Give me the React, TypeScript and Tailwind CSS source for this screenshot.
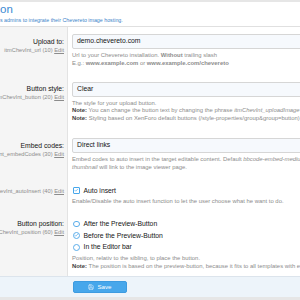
import type { ReactNode } from 'react';
import { Check, Save } from 'lucide-react';

function Row({
  label,
  id,
  children,
  leftTop = 'pt-[10.5px]',
  rightTop = 'pt-[7px]',
  bottom,
}: {
  label?: string;
  id: string;
  children: ReactNode;
  leftTop?: string;
  rightTop?: string;
  bottom: string;
}) {
  return (
    <div className="flex">
      <div className={`flex w-[68px] shrink-0 flex-col items-end border-r border-[#e3e3e3] bg-[#f5f5f5] pr-[3px] ${leftTop}`}>
        {label && <div className="whitespace-nowrap text-[6.8px] leading-[8px] text-[#141414]">{label}</div>}
        <div className={`whitespace-nowrap text-[5.7px] text-[#8c8c8c] ${label ? 'mt-[1px] leading-[7px]' : 'leading-[8px]'}`}>
          {id} <span className="underline">Edit</span>
        </div>
      </div>
      <div className={`min-w-0 flex-1 pl-[4px] ${rightTop} ${bottom}`}>{children}</div>
    </div>
  );
}

function Input({ value }: { value: string }) {
  return (
    <div className="flex h-[15px] w-[260px] items-center rounded-[2px] border border-[#d6d6d6] bg-[#f6f9fd] pl-[4px] text-[6.8px] text-[#141414]">
      {value}
    </div>
  );
}

function Help({ children, top = 'mt-[3px]' }: { children: ReactNode; top?: string }) {
  return <div className={`whitespace-nowrap text-[5.9px] leading-[7.7px] text-[#8c8c8c] ${top}`}>{children}</div>;
}

function Radio({ label, checked }: { label: string; checked?: boolean }) {
  return (
    <div className="flex h-[8px] items-center gap-[4px] pl-[1px] text-[6.8px] text-[#141414]">
      <span className="flex h-[6.5px] w-[6.5px] items-center justify-center rounded-full border border-[#5badea] bg-white">
        {checked && <Check size={4.5} strokeWidth={3.5} className="text-[#47a7eb]" />}
      </span>
      {label}
    </div>
  );
}

export default function App() {
  return (
    <div className="h-[300px] w-[300px] overflow-hidden bg-white font-['Liberation_Sans',Arial,sans-serif]">
      <div className="h-[2px] bg-[#e6e6e6]" />

      {/* page title */}
      <div className="h-[25px] border-b border-[#e0e0e0] pt-[1px]">
        <h1 className="whitespace-nowrap text-[11.5px] leading-[13.5px] text-[#3b8ad3]">on</h1>
        <p className="whitespace-nowrap text-[5.3px] leading-[7px] text-[#3a84c9]">
          s admins to integrate their Chevereto image hosting.
        </p>
      </div>

      {/* options */}
      <Row label="Upload to:" id="itmChevInt_url (10)" bottom="pb-[7.3px]">
        <Input value="demo.chevereto.com" />
        <Help>
          Url to your Chevereto installation. <b>Without</b> trailing slash
          <br />
          E.g.: <b>www.example.com</b> or <b>www.example.com/chevereto</b>
        </Help>
      </Row>

      <Row label="Button style:" id="itmChevInt_button (20)" bottom="pb-[8.2px]">
        <Input value="Clear" />
        <Help>
          The style for your upload button.
          <br />
          <b className="text-[#3c3c3c]">Note:</b> You can change the button text by changing the phrase{' '}
          <i>itmChevInt_uploadImage</i>.
          <br />
          <b className="text-[#3c3c3c]">Note:</b> Styling based on XenForo default buttons
          (/style-properties/group&amp;group=button)
        </Help>
      </Row>

      <Row label="Embed codes:" id="itmChevInt_embedCodes (30)" bottom="pb-[8.2px]">
        <Input value="Direct links" />
        <Help>
          Embed codes to auto insert in the target editable content. Default <i>bbcode-embed-medium</i>
          <br />
          <i>thumbnail</i> will link to the image viewer page.
        </Help>
      </Row>

      <Row id="itmChevInt_autoInsert (40)" leftTop="pt-[7px]" bottom="pb-[8px]">
        <div className="flex h-[8px] items-center gap-[4px] pl-[1px] text-[6.8px] text-[#141414]">
          <span className="flex h-[6.5px] w-[6.5px] items-center justify-center rounded-[1px] border border-[#47a7eb] bg-white">
            <Check size={4.5} strokeWidth={3.5} className="text-[#47a7eb]" />
          </span>
          Auto insert
        </div>
        <Help top="mt-[3.5px]">Enable/Disable the auto insert function to let the user choose what he want to do.</Help>
      </Row>

      <Row label="Button position:" id="itmChevInt_position (60)" leftTop="pt-[6px]" rightTop="pt-[6px]" bottom="pb-[5.2px]">
        <div className="flex flex-col gap-[3.8px]">
          <Radio label="After the Preview-Button" />
          <Radio label="Before the Preview-Button" checked />
          <Radio label="In the Editor bar" />
        </div>
        <Help top="mt-[4px]">
          Position, relativ to the sibling, to place the button.
          <br />
          <b className="text-[#3c3c3c]">Note:</b> The position is based on the preview-button, because it fits to all
          templates with every editor.
        </Help>
      </Row>

      {/* submit bar */}
      <div className="h-[21px] border-t border-[#dce4ec] bg-[#edf4fa] pl-[73px] pt-[3.7px]">
        <button className="flex h-[12.6px] w-[54px] items-center justify-center gap-[3px] rounded-[2px] border border-[#3d9be0] bg-[#47a7eb] text-[6.2px] text-white">
          <Save size={6} strokeWidth={2} />
          Save
        </button>
      </div>
      <div className="h-[3px] bg-[#e6e6e6]" />
    </div>
  );
}
